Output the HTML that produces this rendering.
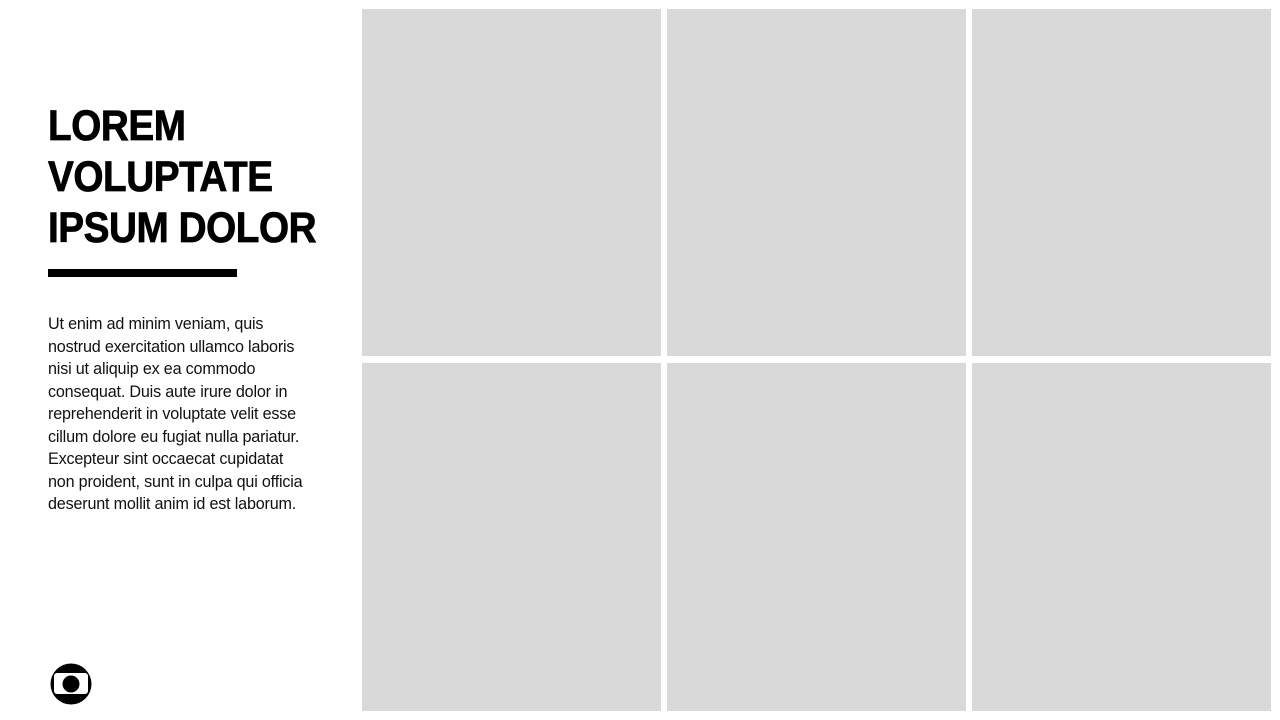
<!DOCTYPE html>
<html><head><style>
body{margin:0;width:1280px;height:720px;background:#fff;position:relative;overflow:hidden;font-family:"Liberation Sans",sans-serif;}
.t{position:absolute;left:48px;top:101px;font-weight:900;font-size:43px;line-height:51px;color:#000;white-space:nowrap;transform:scaleX(0.9);transform-origin:left top;letter-spacing:-0.5px;-webkit-text-stroke:0.8px #000}
.bar{position:absolute;left:48px;top:269px;width:189px;height:8px;background:#000}
.p{position:absolute;left:48px;top:313px;font-size:17px;line-height:22.5px;color:#111;white-space:nowrap;transform:scaleX(0.95);transform-origin:left top;letter-spacing:-0.2px}
.c{position:absolute;background:#d9d9d9;width:299px}
</style></head><body>
<div class="t">LOREM<br>VOLUPTATE<br>IPSUM DOLOR</div>
<div class="bar"></div>
<div class="p">Ut enim ad minim veniam, quis<br>nostrud exercitation ullamco laboris<br>nisi ut aliquip ex ea commodo<br>consequat. Duis aute irure dolor in<br>reprehenderit in voluptate velit esse<br>cillum dolore eu fugiat nulla pariatur.<br>Excepteur sint occaecat cupidatat<br>non proident, sunt in culpa qui officia<br>deserunt mollit anim id est laborum.</div>
<div class="c" style="left:362px;top:9px;height:347px"></div>
<div class="c" style="left:667px;top:9px;height:347px"></div>
<div class="c" style="left:972px;top:9px;height:347px"></div>
<div class="c" style="left:362px;top:363px;height:348px"></div>
<div class="c" style="left:667px;top:363px;height:348px"></div>
<div class="c" style="left:972px;top:363px;height:348px"></div>
<svg style="position:absolute;left:50px;top:663px" width="42" height="42" viewBox="0 0 42 42">
<circle cx="21" cy="21" r="20.5" fill="#000"/>
<rect x="4" y="10" width="34" height="21" rx="3" fill="#fff"/>
<circle cx="21" cy="21" r="8.5" fill="#000"/>
</svg>
</body></html>
